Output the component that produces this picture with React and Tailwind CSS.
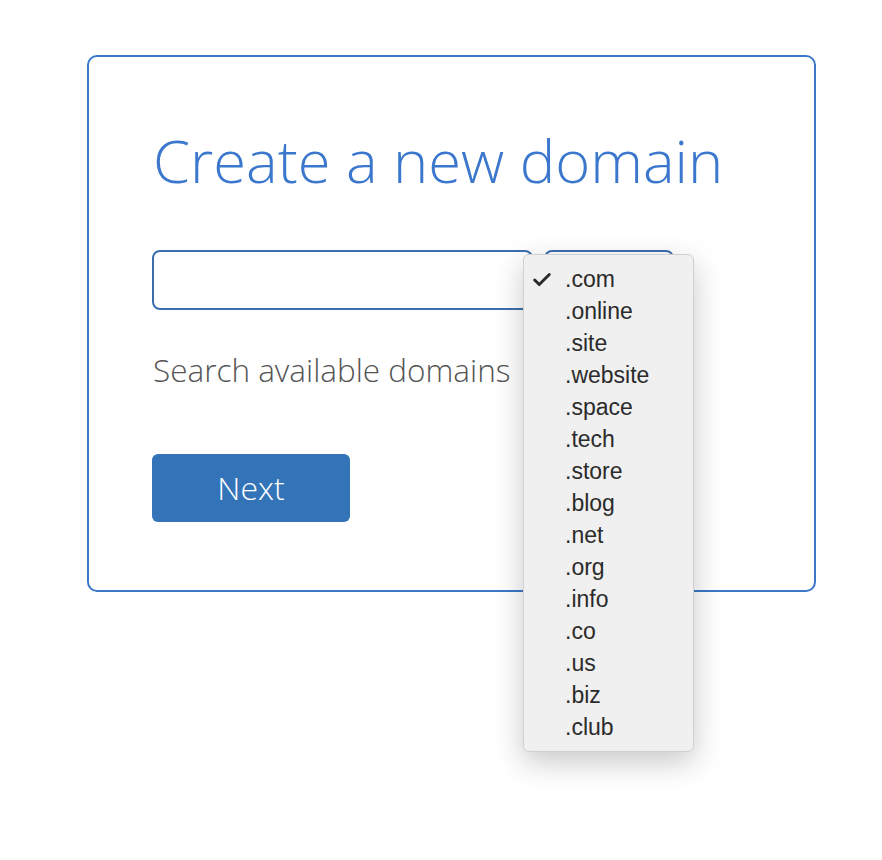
import { Check } from 'lucide-react';

const TLDS = ['.com', '.online', '.site', '.website', '.space', '.tech', '.store', '.blog', '.net', '.org', '.info', '.co', '.us', '.biz', '.club'];

function TldMenu() {
    return (
        <div className="absolute left-[-23px] top-[2px] w-[171px] rounded-[6px] border border-[#d0d0d0] bg-[#f0f0f0] pt-[9px] pb-[7px] shadow-[0_10px_30px_rgba(0,0,0,0.22)] z-10">
            {TLDS.map((tld, i) => (
                <div key={tld} className="relative flex h-[32px] items-center pl-[41px] text-[23px] text-[#2b2b2b] font-['Liberation_Sans',sans-serif]">
                    {i === 0 && (
                        <Check size={22} strokeWidth={3.2} className="absolute left-[7px] top-[5px] text-[#2b2b2b]" />
                    )}
                    {tld}
                </div>
            ))}
        </div>
    );
}

export default function App() {
    return (
        <div className="min-h-[860px] bg-white pl-[87px] pt-[55px] font-['Open_Sans',sans-serif]">
            <div className="h-[537px] w-[729px] rounded-[10px] border-2 border-[#3c78c8] pl-[63px] pt-[73px]">
                <h1 className="pl-px text-[59.7px] font-light leading-none text-[#3a77cd]">Create a new domain</h1>

                <div className="mt-[60px] flex gap-[11px]">
                    <div className="h-[60px] w-[381px] rounded-[8px] border-2 border-[#3a6fae] bg-white" />
                    <div className="relative h-[60px] w-[130px] rounded-[8px] border-2 border-[#3a6fae] bg-white">
                        <TldMenu />
                    </div>
                </div>

                <p className="mt-[44px] pl-px text-[31.5px] font-light leading-none text-[#555]">Search available domains</p>

                <button className="mt-[69px] flex h-[68px] w-[198px] items-center justify-center rounded-[6px] bg-[#3374b9] text-[32px] font-light text-white">
                    Next
                </button>
            </div>
        </div>
    );
}
